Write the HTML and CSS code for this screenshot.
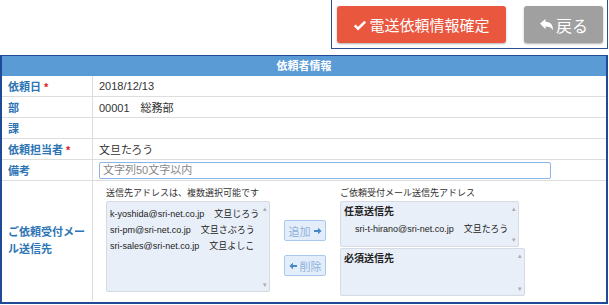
FILE: index.html
```html
<!DOCTYPE html>
<html lang="ja">
<head>
    <meta charset="UTF-8">
    <title>依頼者情報</title>
    <link rel="stylesheet" href="styles.css">
</head>
<body>

    <div class="toolbar">
        <a href="#" class="btn btn-confirm">
            <svg class="ico" viewBox="0 0 16 16" width="14" height="14"><path d="M2 8.5l3.8 3.8L14 4.2" fill="none" stroke="#fff" stroke-width="3"/></svg>電送依頼情報確定
        </a>
        <a href="#" class="btn btn-back">
            <svg class="ico" viewBox="0 0 16 16" width="15" height="15"><path d="M1 7l6-5v3c5 0 8 3 8 9-2-3-4-4-8-4v3z" fill="#fff"/></svg>戻る
        </a>
    </div>

    <div class="panel">
        <div class="panel-head">依頼者情報</div>
        <table class="form">
            <tr>
                <th>依頼日 <span class="req">*</span></th>
                <td>2018/12/13</td>
            </tr>
            <tr>
                <th>部</th>
                <td>00001　総務部</td>
            </tr>
            <tr>
                <th>課</th>
                <td></td>
            </tr>
            <tr>
                <th>依頼担当者 <span class="req">*</span></th>
                <td>文旦たろう</td>
            </tr>
            <tr>
                <th>備考</th>
                <td><input type="text" class="memo" placeholder="文字列50文字以内"></td>
            </tr>
            <tr class="mail-row">
                <th>ご依頼受付メール送信先</th>
                <td>
                    <div class="mail">
                        <div class="mail-col">
                            <div class="cap">送信先アドレスは、複数選択可能です</div>
                            <div class="list list-src">
                                <div>k-yoshida@sri-net.co.jp<span class="nm">文旦じろう</span></div>
                                <div>sri-pm@sri-net.co.jp<span class="nm">文旦さぶろう</span></div>
                                <div>sri-sales@sri-net.co.jp<span class="nm">文旦よしこ</span></div>
                                <span class="sb up">▴</span><span class="sb down">▾</span>
                            </div>
                        </div>
                        <div class="moves">
                            <a href="#" class="mv">追加<svg class="arr" viewBox="0 0 10 10" width="8" height="8"><path d="M0 3.8h5V1l4.5 4L5 9V6.2H0z" fill="#4a86cc"/></svg></a>
                            <a href="#" class="mv"><svg class="arr" viewBox="0 0 10 10" width="8" height="8"><path d="M10 3.8H5V1L.5 5 5 9V6.2h5z" fill="#4a86cc"/></svg>削除</a>
                        </div>
                        <div class="mail-col">
                            <div class="cap">ご依頼受付メール送信先アドレス</div>
                            <div class="list list-opt">
                                <div class="grp">任意送信先</div>
                                <div class="item">sri-t-hirano@sri-net.co.jp<span class="nm">文旦たろう</span></div>
                                <span class="sb up">▴</span><span class="sb down">▾</span>
                            </div>
                            <div class="list list-req">
                                <div class="grp">必須送信先</div>
                                <span class="sb up">▴</span><span class="sb down">▾</span>
                            </div>
                        </div>
                    </div>
                </td>
            </tr>
        </table>
    </div>

</body>
</html>
```

FILE: styles.css
```css
body {
    margin: 0;
    font-family: 'Liberation Sans', 'Noto Sans CJK JP', sans-serif;
    font-size: 11px;
    color: #333;
    background: #fff;
}

.toolbar {
    display: flex;
    justify-content: space-between;
    margin-left: 331px;
    margin-right: 1px;
    height: 49px;
    padding: 6px 4px 0 5px;
    box-sizing: border-box;
    border: 1px solid #2d4f8e;
    border-top: none;
}

.btn {
    display: flex;
    align-items: center;
    justify-content: center;
    height: 37px;
    border-radius: 3px;
    color: #fff;
    text-decoration: none;
    font-size: 15px;
    box-shadow: 0 1px 2px rgba(0, 0, 0, 0.3);
}

.btn .ico {
    margin-right: 2px;
}

.btn-confirm {
    width: 169px;
    background: #e9573f;
}

.btn-back {
    width: 79px;
    background: #a0a0a0;
    font-size: 16px;
}

.panel {
    margin-top: 6px;
    margin-right: 1px;
    border: 2px solid #1f4b96;
    border-top: 1px solid #1f4b96;
    height: 249px;
    box-sizing: border-box;
}

.panel-head {
    height: 20px;
    line-height: 20px;
    background: #5b9bd5;
    color: #fff;
    font-weight: bold;
    text-align: center;
    font-size: 11px;
}

.form {
    width: 100%;
    border-collapse: collapse;
}

.form th,
.form td {
    height: 20px;
    padding: 0 0 0 6px;
    border-bottom: 1px solid #ddd;
    text-align: left;
    vertical-align: middle;
}

.form th {
    width: 84px;
    color: #2e75b6;
    font-weight: bold;
    border-right: 1px solid #ddd;
}

.req {
    color: #e02020;
}

.memo {
    display: block;
    width: 452px;
    height: 17px;
    box-sizing: border-box;
    margin: 0;
    padding: 0 3px;
    border: 1px solid #8ab4e6;
    border-radius: 2px;
    font-family: inherit;
    font-size: 11px;
    outline: none;
}

.memo::placeholder {
    color: #888;
}

.mail-row th,
.mail-row td {
    height: 120px;
    border-bottom: none;
}

.mail-row th {
    line-height: 17px;
}

.mail {
    display: flex;
    padding: 5px 0 0 7px;
    height: 115px;
}

.mail-col {
    display: flex;
    flex-direction: column;
}

.cap {
    height: 15px;
    line-height: 15px;
    font-size: 9px;
    color: #333;
    white-space: nowrap;
}

.list {
    position: relative;
    background: #e9eff8;
    border: 1px solid #d6dbe3;
    border-radius: 2px;
    box-sizing: border-box;
    line-height: 15px;
    font-size: 9px;
    color: #222;
    white-space: nowrap;
    overflow: hidden;
}

.nm {
    font-size: 9px;
    margin-left: 10px;
}

.list-src {
    width: 164px;
    height: 91px;
    padding: 4px 0 0 3px;
    line-height: 16px;
}

.list-opt {
    width: 179px;
    height: 46px;
    padding: 2px 0 0 3px;
}

.list-req {
    width: 185px;
    height: 48px;
    margin-top: 1px;
    padding: 2px 0 0 3px;
}

.grp {
    font-weight: bold;
    font-size: 10px;
}

.item {
    padding-left: 11px;
    margin-top: 3px;
}

.sb {
    position: absolute;
    right: 2px;
    font-size: 7px;
    line-height: 7px;
    color: #aaa;
}

.sb.up {
    top: 3px;
}

.sb.down {
    bottom: 3px;
}

.moves {
    display: flex;
    flex-direction: column;
    gap: 14px;
    padding: 34px 14px 0 14px;
}

.mv {
    display: flex;
    align-items: center;
    justify-content: center;
    gap: 3px;
    width: 42px;
    height: 21px;
    box-sizing: border-box;
    background: #e3eefa;
    border: 1px solid #a9c9ec;
    border-radius: 2px;
    color: #8fb1dc;
    text-decoration: none;
    font-size: 11px;
}
```
